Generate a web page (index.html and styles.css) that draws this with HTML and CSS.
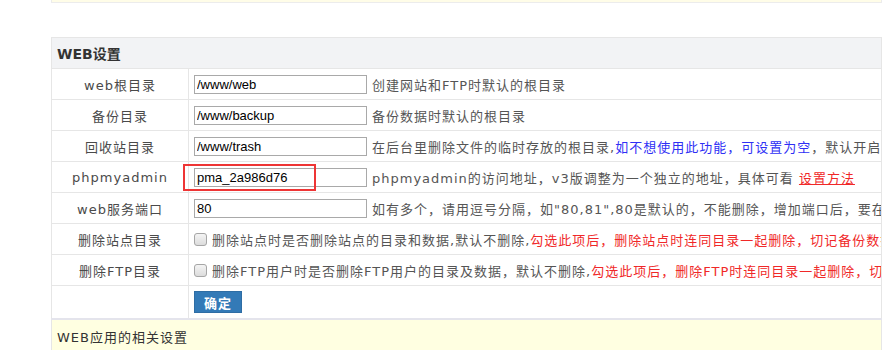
FILE: index.html
```
<!DOCTYPE html>
<html lang="zh-CN">
<head>
  <meta charset="UTF-8">
  <title>WEB设置</title>
  <link rel="stylesheet" href="styles.css">
</head>
<body>
  <div class="notice"></div>
  <table class="conf">
    <colgroup>
      <col class="col-label">
      <col class="col-value">
    </colgroup>
    <tr class="title">
      <th colspan="2">WEB设置</th>
    </tr>
    <tr>
      <td class="label">web根目录</td>
      <td><input class="path" type="text" value="/www/web"><span class="tip">创建网站和FTP时默认的根目录</span></td>
    </tr>
    <tr>
      <td class="label">备份目录</td>
      <td><input class="path" type="text" value="/www/backup"><span class="tip">备份数据时默认的根目录</span></td>
    </tr>
    <tr>
      <td class="label">回收站目录</td>
      <td><input class="path" type="text" value="/www/trash"><span class="tip">在后台里删除文件的临时存放的根目录,<span class="blue">如不想使用此功能，可设置为空</span>，默认开启</span></td>
    </tr>
    <tr>
      <td class="label">phpmyadmin</td>
      <td class="open"><span class="marked"><input class="path" type="text" value="pma_2a986d76"><span class="mark"></span></span><span class="tip">phpmyadmin的访问地址，v3版调整为一个独立的地址，具体可看 <a class="red-link" href="#">设置方法</a></span></td>
    </tr>
    <tr>
      <td class="label">web服务端口</td>
      <td><input class="path" type="text" value="80"><span class="tip">如有多个，请用逗号分隔，如"80,81",80是默认的，不能删除，增加端口后，要在防火墙里放行</span></td>
    </tr>
    <tr>
      <td class="label">删除站点目录</td>
      <td><label class="check"><input type="checkbox"><span class="tip">删除站点时是否删除站点的目录和数据,默认不删除,<span class="red">勾选此项后，删除站点时连同目录一起删除，切记备份数据</span></span></label></td>
    </tr>
    <tr>
      <td class="label">删除FTP目录</td>
      <td><label class="check"><input type="checkbox"><span class="tip">删除FTP用户时是否删除FTP用户的目录及数据，默认不删除,<span class="red">勾选此项后，删除FTP时连同目录一起删除，切记备份数据</span></span></label></td>
    </tr>
    <tr class="submit">
      <td></td>
      <td><button class="btn">确定</button></td>
    </tr>
    <tr class="section">
      <td colspan="2">WEB应用的相关设置</td>
    </tr>
  </table>
</body>
</html>
```
FILE: styles.css
```
body {
  margin: 0;
  font-family: "DejaVu Sans", "Noto Sans CJK SC", sans-serif;
  font-size: 13px;
  color: #555;
  background: #fff;
  overflow: hidden;
}
.notice {
  margin-left: 51px;
  height: 2px;
  background: #fffde8;
  border: 1px solid #ececec;
  border-top: none;
}
.conf {
  margin: 34px 0 0 51px;
  width: 831px;
  table-layout: fixed;
  border-collapse: collapse;
}
.col-label {
  width: 137px;
}
.conf th,
.conf td {
  border: 1px solid #e6e6e6;
  height: 30px;
  padding: 0;
  white-space: nowrap;
  overflow: hidden;
}
.conf td.open {
  overflow: visible;
}
.title th {
  background: #f2f3f5;
  text-align: left;
  padding-left: 5px;
  font-size: 14px;
  font-weight: bold;
  color: #333;
}
.conf td {
  padding-left: 5px;
}
.conf td.label {
  padding-left: 0;
  text-align: center;
  color: #4a4a4a;
  letter-spacing: 1px;
}
.path {
  box-sizing: border-box;
  width: 173px;
  height: 19px;
  margin: 0 5px 0 0;
  padding: 0 2px;
  border: 1px solid #a9a9a9;
  font-family: "Liberation Sans", Arial, sans-serif;
  font-size: 13px;
  color: #000;
  vertical-align: middle;
}
.tip {
  vertical-align: middle;
  letter-spacing: 1px;
}
.blue {
  color: #2f2ff5;
}
.red,
.red-link {
  color: #f02828;
}
.marked {
  position: relative;
  display: inline-block;
  vertical-align: middle;
}
.marked .path {
  vertical-align: top;
}
.mark {
  position: absolute;
  left: -11px;
  top: -4px;
  width: 133px;
  height: 27px;
  box-sizing: border-box;
  border: 2px solid #ee3535;
}
.check input {
  appearance: none;
  box-sizing: border-box;
  width: 13px;
  height: 13px;
  margin: 0 5px 0 0;
  border: 1px solid #a6a6a6;
  border-radius: 3px;
  background: linear-gradient(#f4f4f4, #dcdcdc);
  vertical-align: middle;
}
.submit td {
  height: 32px;
}
.btn {
  width: 48px;
  height: 22px;
  padding: 0;
  background: #337ab7;
  border: 1px solid #2e6da4;
  color: #fff;
  font-family: "Noto Sans CJK SC", sans-serif;
  font-size: 13px;
  font-weight: bold;
  letter-spacing: 1px;
  vertical-align: middle;
}
.section td {
  border-top: 2px solid #e4e4ec;
  background: #ffffe1;
  height: 33px;
  padding-left: 5px;
  color: #333;
  letter-spacing: 1px;
}
```
